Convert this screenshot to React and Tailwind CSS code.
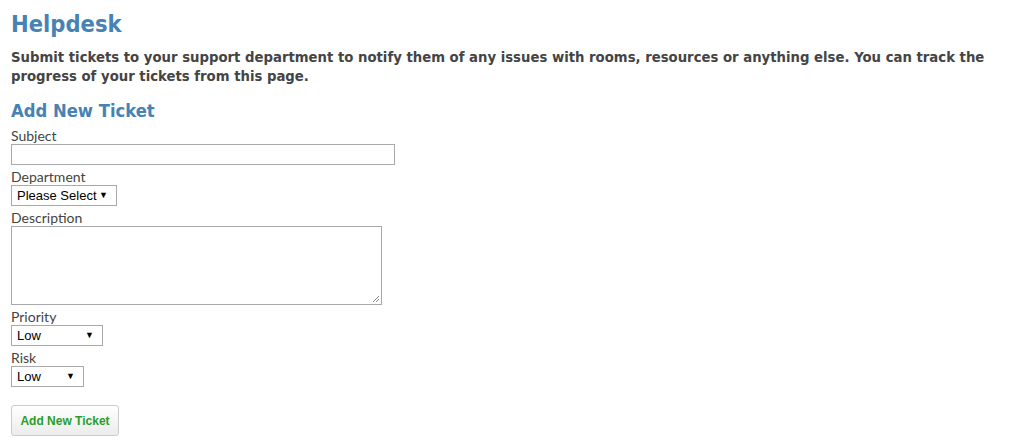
import React from 'react';

const Label = ({ children }) => (
  <label className="block text-[14px] leading-[16px] text-[#444] font-['Lato',sans-serif]">{children}</label>
);

const Select = ({ width, value }) => (
  <div
    className={`flex items-center justify-between h-[21px] border border-[#a9a9a9] bg-white pl-[5px] pr-[8px] font-['Liberation_Sans',Arial,sans-serif] text-[13px] text-black ${width}`}
  >
    <span>{value}</span>
    <span className="text-[9px] leading-none">▼</span>
  </div>
);

export default function App() {
  return (
    <div className="bg-white min-h-[444px] px-[11px] pt-[9px] font-['DejaVu_Sans',Verdana,sans-serif]">
      <h1 className="text-[23.5px] leading-[30px] font-bold text-[#4682b4] font-['DejaVu_Sans_Condensed','DejaVu_Sans',sans-serif]">Helpdesk</h1>
      <p className="mt-[9px] text-[13.25px] leading-[19px] font-bold text-[#444] max-w-[995px]">
        Submit tickets to your support department to notify them of any issues with rooms, resources or anything else. You can track the progress of your tickets from this page.
      </p>
      <h2 className="mt-[13px] text-[18.25px] leading-[24px] font-bold text-[#4682b4] font-['DejaVu_Sans_Condensed','DejaVu_Sans',sans-serif]">Add New Ticket</h2>
      <form className="mt-[5px] flex flex-col">
        <Label>Subject</Label>
        <div className="h-[21px] w-[384px] border border-[#a9a9a9] bg-white" />
        <div className="mt-[4px]"><Label>Department</Label></div>
        <Select width="w-[106px]" value="Please Select" />
        <div className="mt-[4px]"><Label>Description</Label></div>
        <div className="relative h-[79px] w-[371px] border border-[#a9a9a9] bg-white">
          <svg className="absolute right-[1px] bottom-[1px]" width="9" height="9" viewBox="0 0 9 9">
            <path d="M8 2 L2 8 M8 5 L5 8" stroke="#888" strokeWidth="1" />
          </svg>
        </div>
        <div className="mt-[4px]"><Label>Priority</Label></div>
        <Select width="w-[92px]" value="Low" />
        <div className="mt-[4px]"><Label>Risk</Label></div>
        <Select width="w-[73px]" value="Low" />
        <div className="mt-[18px]">
          <button
            type="button"
            className="h-[31px] w-[108px] rounded-[3px] border border-[#ccc] bg-gradient-to-b from-white to-[#ececec] font-['Liberation_Sans',Arial,sans-serif] text-[12px] font-bold text-[#2a9d2a]"
          >
            Add New Ticket
          </button>
        </div>
      </form>
    </div>
  );
}
